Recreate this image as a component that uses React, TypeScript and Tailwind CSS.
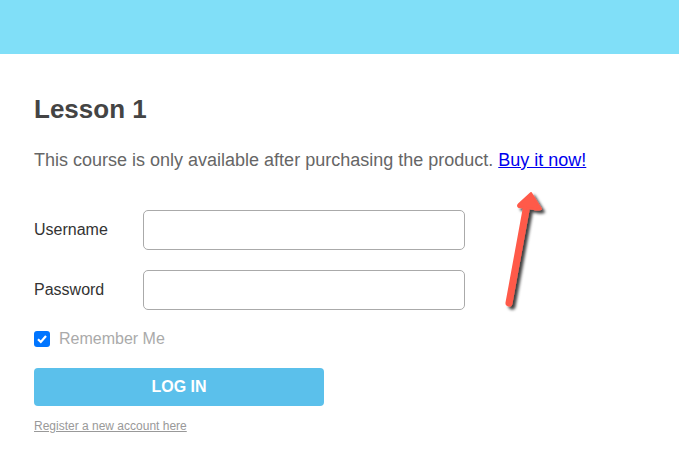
import React from "react";

export default function App() {
  return (
    <div className="relative min-h-[462px] w-[679px] bg-white font-['Liberation_Sans',Arial,sans-serif]">
      <div className="h-[54px] w-full bg-[#80dff8]" />
      <div className="pl-[34px]">
        <h1 className="mt-[40px] text-[26px] font-bold leading-[30px] text-[#444444]">Lesson 1</h1>
        <p className="mt-[24px] text-[18px] leading-[24px] text-[#666666]">
          This course is only available after purchasing the product.{" "}
          <a href="#" className="text-[#0000ee] underline">Buy it now!</a>
        </p>
        <form className="mt-[38px] flex flex-col">
          <div className="flex items-center">
            <label className="w-[109px] text-[16px] leading-[24px] text-[#333333]">Username</label>
            <input type="text" className="h-[40px] w-[322px] rounded-[5px] border border-[#aaaaaa] bg-white" />
          </div>
          <div className="mt-[20px] flex items-center">
            <label className="w-[109px] text-[16px] leading-[24px] text-[#333333]">Password</label>
            <input type="password" className="h-[40px] w-[322px] rounded-[5px] border border-[#aaaaaa] bg-white" />
          </div>
          <div className="mt-[19px] flex h-[20px] items-center">
            <span className="flex h-[16px] w-[16px] items-center justify-center rounded-[3px] bg-[#0075ff]">
              <svg width="12" height="12" viewBox="0 0 12 12">
                <path d="M2 6.3 L4.8 9 L10 3" fill="none" stroke="white" strokeWidth="2.2" />
              </svg>
            </span>
            <span className="ml-[9px] text-[16px] leading-[20px] text-[#aaaaaa]">Remember Me</span>
          </div>
          <button type="button" className="mt-[19px] h-[38px] w-[290px] rounded-[4px] bg-[#5bc0eb] text-[16px] font-bold text-white">
            LOG IN
          </button>
          <a href="#" className="mt-[12px] text-[12px] leading-[16px] text-[#999999] underline">Register a new account here</a>
        </form>
      </div>
      <svg className="absolute left-[490px] top-[180px]" width="70" height="140" viewBox="0 0 70 140">
        <defs>
          <filter id="sh" x="-50%" y="-50%" width="200%" height="200%">
            <feDropShadow dx="3" dy="3" stdDeviation="1.6" floodColor="#000" floodOpacity="0.75" />
          </filter>
        </defs>
        <g filter="url(#sh)">
          <line x1="19" y1="123" x2="36" y2="30" stroke="#ff5a4a" strokeWidth="7" strokeLinecap="round" />
          <path d="M41 13 L51 29 Q47 30 44 29 L29 27 Q27 26 29 24 Z" fill="#ff5a4a" strokeLinejoin="round" stroke="#ff5a4a" strokeWidth="2" />
        </g>
      </svg>
    </div>
  );
}
